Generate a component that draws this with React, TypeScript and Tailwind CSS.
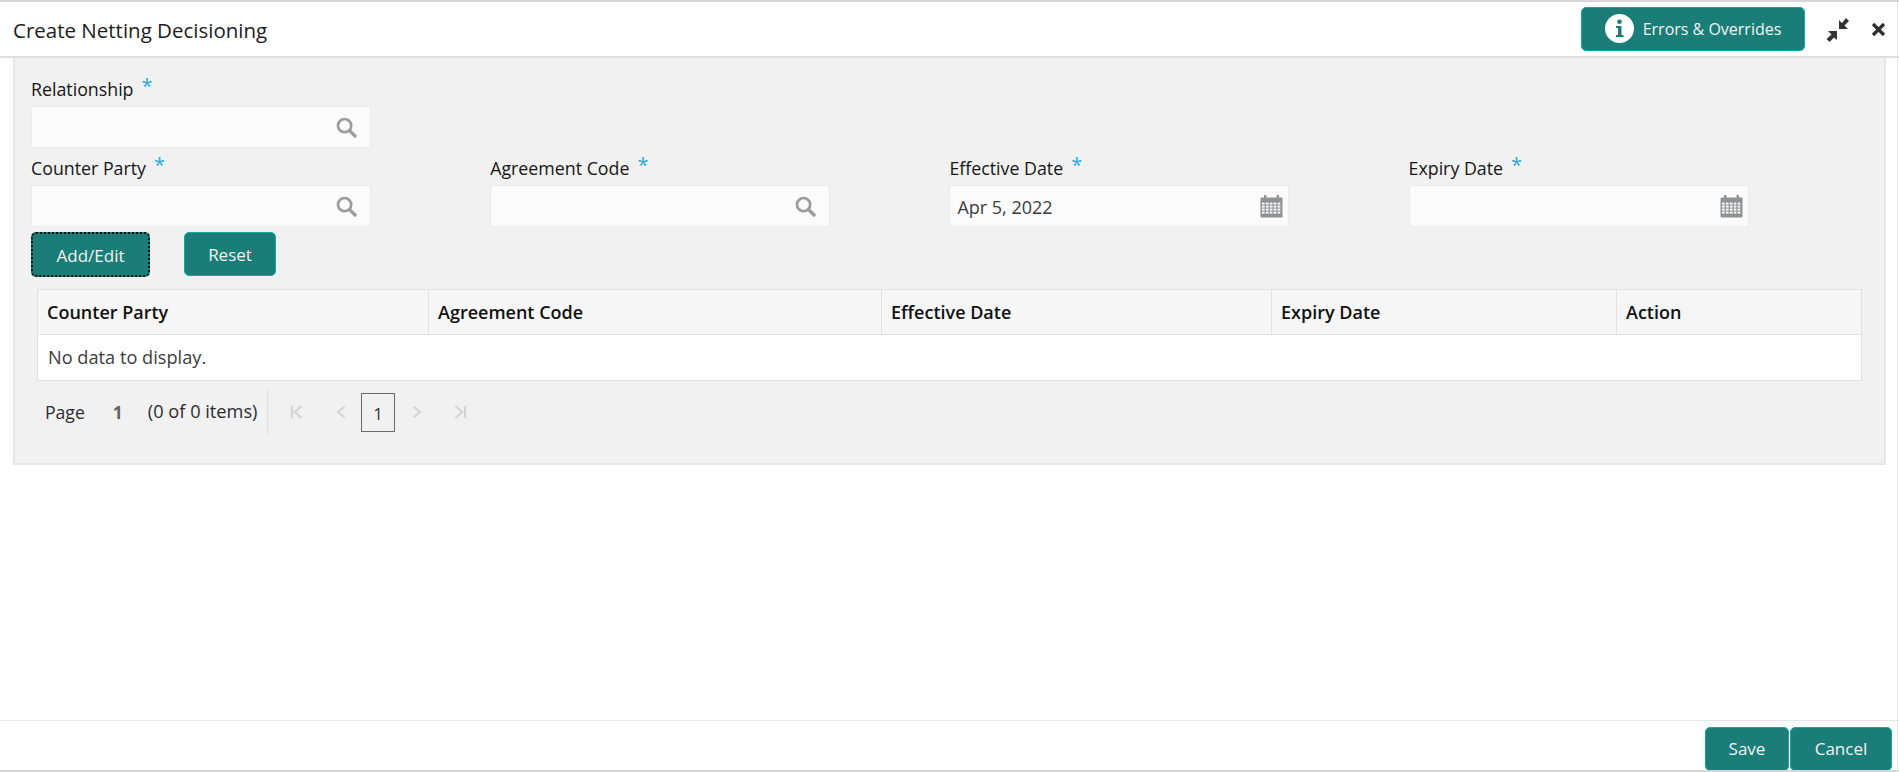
import React from "react";

const font = { fontFamily: '"Open Sans", "Noto Sans", sans-serif' };

function SearchIcon() {
  return (
    <svg width="21" height="21" viewBox="0 0 21 21" fill="none" className="shrink-0">
      <circle cx="8.6" cy="8.6" r="6.6" stroke="#9c9c9c" strokeWidth="2.7" />
      <path d="M13.6 13.6 L19 19" stroke="#9c9c9c" strokeWidth="3.4" strokeLinecap="round" />
    </svg>
  );
}

function CalendarIcon() {
  const cells: React.ReactNode[] = [];
  for (let r = 0; r < 4; r++) {
    for (let c = 0; c < 5; c++) {
      cells.push(<rect key={r + "-" + c} x={2 + c * 3.9} y={7.6 + r * 3} width="2.7" height="2" fill="#fbfbfb" />);
    }
  }
  return (
    <svg width="23" height="23" viewBox="0 0 23 23" className="shrink-0">
      <rect x="0.5" y="2.5" width="22" height="20" rx="1" fill="#8f9193" />
      <rect x="4" y="0" width="2.4" height="5" fill="#8f9193" />
      <rect x="16.6" y="0" width="2.4" height="5" fill="#8f9193" />
      {cells}
    </svg>
  );
}

function Star() {
  return <span className="text-[#29a9e0] text-[20px] leading-none ml-[8px] -mt-[9px]">*</span>;
}

function Field({ label, value, icon }: { label: string; value?: string; icon: "search" | "date" }) {
  return (
    <div className="w-[340px]">
      <div className="flex items-center h-[37px] text-[17.8px] text-[#161616] leading-none pt-[5px]">
        <span>{label}</span>
        <Star />
      </div>
      <div className="h-[42px] bg-[#fbfbfb] border border-[#ebebeb] rounded-[2px] flex items-center justify-between pl-[6px] pr-[13px]">
        <span className="text-[18px] text-[#3c3c3c] pt-[2px] ml-[1px]">{value}</span>
        {icon === "search" ? <SearchIcon /> : <span className="-mr-[8px]"><CalendarIcon /></span>}
      </div>
    </div>
  );
}

function TealButton({ children, className }: { children: React.ReactNode; className: string }) {
  return (
    <button className={"bg-[#1b7d78] text-[#f2f2f2] rounded-[5px] flex items-center justify-center " + className}>
      {children}
    </button>
  );
}

const columns = [
  { label: "Counter Party", w: "w-[391px]" },
  { label: "Agreement Code", w: "w-[453px]" },
  { label: "Effective Date", w: "w-[390px]" },
  { label: "Expiry Date", w: "w-[345px]" },
  { label: "Action", w: "flex-1" },
];

export default function App() {
  return (
    <div style={font} className="w-[1899px] h-[772px] bg-white flex flex-col overflow-hidden relative border-t-2 border-[#d6d6d6]">
      <header className="h-[56px] shrink-0 flex items-center border-b-2 border-[#dedede] pl-[13px] pr-[13px]">
        <h1 className="text-[20.5px] text-[#1c1c1c] font-normal pt-[3px]">Create Netting Decisioning</h1>
        <div className="ml-auto flex items-center">
          <TealButton className="w-[224px] h-[44px] border border-[#14a99f] gap-[9px] -mt-[1px] text-[16px]">
            <svg width="29" height="29" viewBox="0 0 29 29">
              <circle cx="14.5" cy="14.5" r="14.5" fill="#ffffff" />
              <circle cx="14.5" cy="7.8" r="2.3" fill="#1b7d78" />
              <path d="M11 12 H16.5 V21 H18.5 V23 H11 V21 H13 V14 H11 Z" fill="#1b7d78" />
            </svg>
            <span>Errors &amp; Overrides</span>
          </TealButton>
          <svg width="24" height="24" viewBox="0 0 24 24" className="ml-[21px] mt-[1px]">
            <path d="M13 2 V11 H22 L18.5 7.5 L23 3 L20 0 L16 5 Z" fill="#333333" />
            <path d="M11 22 V13 H2 L5.5 16.5 L0.5 21 L3.5 24 L8 19.5 Z" fill="#333333" />
          </svg>
          <svg width="15" height="15" viewBox="0 0 15 15" className="ml-[21px] mt-[1px]">
            <path d="M2 2 L13 13 M13 2 L2 13" stroke="#2f2f2f" strokeWidth="3.2" />
          </svg>
        </div>
      </header>

      <main className="flex-1 flex flex-col min-h-0">
        <section className="ml-[13px] mr-[13px] h-[407px] bg-[#f1f1f1] border-l-2 border-r-2 border-b-2 border-[#e6e6e6] pl-[16px] pr-[22px] pt-[11px]">
          <Field label="Relationship" icon="search" />
          <div className="flex gap-[119.2px]">
            <Field label="Counter Party" icon="search" />
            <Field label="Agreement Code" icon="search" />
            <Field label="Effective Date" value="Apr 5, 2022" icon="date" />
            <Field label="Expiry Date" icon="date" />
          </div>
          <div className="flex gap-[34px] mt-[5px]">
            <TealButton className="w-[119px] h-[45px] border-2 border-dotted border-[#111] text-[17px] pt-[2px]">Add/Edit</TealButton>
            <TealButton className="w-[92px] h-[44px] border border-[#14a99f] text-[17px] pt-[2px]">Reset</TealButton>
          </div>
          <div className="ml-[6px] mt-[12px] border border-[#e0e0e0] bg-white">
            <div className="flex h-[45px] bg-[#f6f6f6] border-b border-[#e0e0e0]">
              {columns.map((c, i) => (
                <div
                  key={c.label}
                  className={c.w + " flex items-center pl-[9px] pt-[1px] text-[18px] font-semibold text-[#111] " + (i < 4 ? "border-r border-[#e0e0e0]" : "")}
                >
                  {c.label}
                </div>
              ))}
            </div>
            <div className="h-[45px] flex items-center pl-[10px] pt-[1px] text-[18.2px] text-[#3c3c3c]">No data to display.</div>
          </div>
          <div className="ml-[6px] mt-[8px] flex items-center h-[46px]">
            <div className="flex items-center h-full border-r border-[#e0e0e0] pl-[8px] w-[231px] text-[17.6px] text-[#2c2c2c]">
              <span>Page</span>
              <span className="ml-[28px] font-bold text-[#666]">1</span>
              <span className="ml-[25px] text-[18.2px]">(0 of 0 items)</span>
            </div>
            <div className="flex items-center">
              <svg width="14" height="14" viewBox="0 0 14 14" className="ml-[22px]">
                <path d="M2 1 V13 M11.5 1 L5 7 L11.5 13" stroke="#d4d4d4" strokeWidth="2.2" fill="none" />
              </svg>
              <svg width="12" height="14" viewBox="0 0 12 14" className="ml-[31px]">
                <path d="M9.5 1.5 L3 7 L9.5 12.5" stroke="#d4d4d4" strokeWidth="2" fill="none" />
              </svg>
              <div className="ml-[14px] w-[34px] h-[39px] mt-[1px] border border-[#6b6b6b] flex items-center justify-center text-[17px] text-[#333] pt-[3px]">1</div>
              <svg width="12" height="14" viewBox="0 0 12 14" className="ml-[16px]">
                <path d="M2.5 1.5 L9 7 L2.5 12.5" stroke="#d4d4d4" strokeWidth="2" fill="none" />
              </svg>
              <svg width="14" height="14" viewBox="0 0 14 14" className="ml-[30px]">
                <path d="M12 1 V13 M2.5 1 L9 7 L2.5 13" stroke="#d4d4d4" strokeWidth="2.2" fill="none" />
              </svg>
            </div>
          </div>
        </section>
      </main>

      <footer className="h-[52px] shrink-0 border-t border-[#e4e8e8] flex justify-end items-start pt-[6px] pr-[7px] gap-[1px]">
        <TealButton className="w-[84px] h-[44px] border border-[#14a99f] text-[17px]">Save</TealButton>
        <TealButton className="w-[102px] h-[44px] border border-[#14a99f] text-[17px]">Cancel</TealButton>
      </footer>
      <div className="absolute left-0 right-0 bottom-0 h-[2px] bg-[#d6d6d6]" />
      <div className="absolute top-0 bottom-0 right-[1px] w-[1px] bg-[#e8e8e8]" />
    </div>
  );
}
